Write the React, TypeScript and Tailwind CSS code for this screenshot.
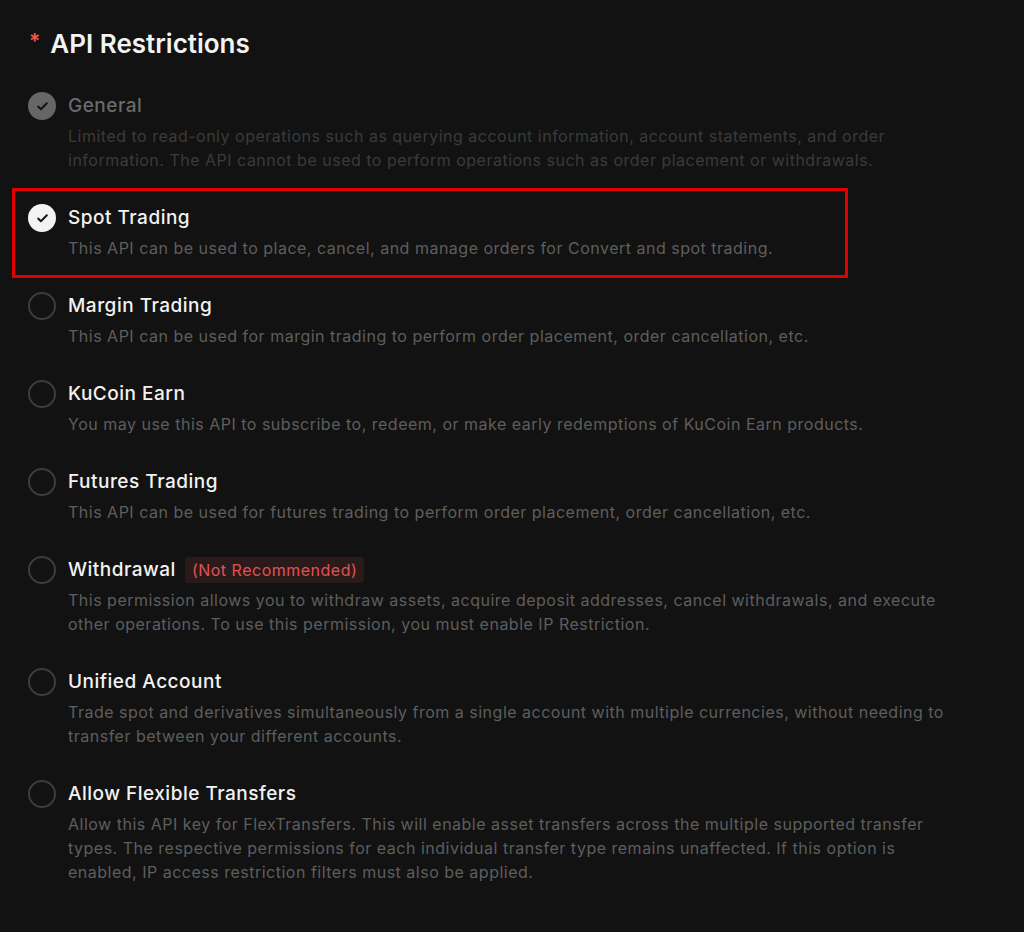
import { Check } from "lucide-react";

interface OptionProps {
  id: string;
  title: string;
  desc: string;
  state: "disabled" | "checked" | "off";
  badge?: string;
  highlight?: boolean;
}

const options: OptionProps[] = [
  {
    id: "general",
    title: "General",
    desc: "Limited to read-only operations such as querying account information, account statements, and order information. The API cannot be used to perform operations such as order placement or withdrawals.",
    state: "disabled",
  },
  {
    id: "spot",
    title: "Spot Trading",
    desc: "This API can be used to place, cancel, and manage orders for Convert and spot trading.",
    state: "checked",
    highlight: true,
  },
  {
    id: "margin",
    title: "Margin Trading",
    desc: "This API can be used for margin trading to perform order placement, order cancellation, etc.",
    state: "off",
  },
  {
    id: "earn",
    title: "KuCoin Earn",
    desc: "You may use this API to subscribe to, redeem, or make early redemptions of KuCoin Earn products.",
    state: "off",
  },
  {
    id: "futures",
    title: "Futures Trading",
    desc: "This API can be used for futures trading to perform order placement, order cancellation, etc.",
    state: "off",
  },
  {
    id: "withdrawal",
    title: "Withdrawal",
    desc: "This permission allows you to withdraw assets, acquire deposit addresses, cancel withdrawals, and execute other operations. To use this permission, you must enable IP Restriction.",
    state: "off",
    badge: "(Not Recommended)",
  },
  {
    id: "unified",
    title: "Unified Account",
    desc: "Trade spot and derivatives simultaneously from a single account with multiple currencies, without needing to transfer between your different accounts.",
    state: "off",
  },
  {
    id: "flex",
    title: "Allow Flexible Transfers",
    desc: "Allow this API key for FlexTransfers. This will enable asset transfers across the multiple supported transfer types. The respective permissions for each individual transfer type remains unaffected. If this option is enabled, IP access restriction filters must also be applied.",
    state: "off",
  },
];

function CheckCircle({ state }: { state: OptionProps["state"] }) {
  if (state === "off") {
    return (
      <div className="w-7 h-7 rounded-full border-2 border-[#3c3c3c] shrink-0" />
    );
  }
  return (
    <div
      className={
        state === "checked"
          ? "w-7 h-7 rounded-full bg-[#f3f3f3] flex items-center justify-center shrink-0"
          : "w-7 h-7 rounded-full bg-[#666666] flex items-center justify-center shrink-0"
      }
    >
      <Check size={13} strokeWidth={3.5} color="#121212" />
    </div>
  );
}

export default function App() {
  return (
    <div
      className="min-h-[932px] w-full bg-[#121212] pl-3 pt-[27px]"
      style={{ fontFamily: "Inter, 'Noto Sans', sans-serif" }}
    >
      <h2 className="pl-[17px] flex items-center gap-[10px] h-8 text-[26px] font-semibold text-[#f3f3f3]">
        <span className="text-[#f0584e] text-[21px] -mt-0.5">*</span>
        API Restrictions
      </h2>

      <div className="mt-[17px] flex flex-col">
        {options.map((opt) => (
          <div key={opt.id} className="relative flex gap-3 px-4 py-4">
            <CheckCircle state={opt.state} />
            <div className="flex flex-col gap-1 w-[892px]">
              <div className="flex items-center gap-[9px] h-7">
                <span
                  className={
                    opt.state === "disabled"
                      ? "text-[19px] font-medium tracking-[0.5px] text-[#6a6a6a]"
                      : "text-[19px] font-medium tracking-[0.5px] text-[#f2f2f2]"
                  }
                >
                  {opt.title}
                </span>
                {opt.badge && (
                  <span className="bg-[#2a1a1a] text-[#e05252] text-[16px] tracking-[0.5px] px-[7px] h-[26px] flex items-center rounded">
                    {opt.badge}
                  </span>
                )}
              </div>
              <p
                className={
                  opt.state === "disabled"
                    ? "text-[16px] leading-6 tracking-[0.5px] text-[#3b3b3b]"
                    : "text-[16px] leading-6 tracking-[0.5px] text-[#5e5e5e]"
                }
              >
                {opt.desc}
              </p>
            </div>
            {opt.highlight && (
              <div className="absolute left-0 top-0 w-[836px] h-[90px] border-[3px] border-[#e00000] pointer-events-none" />
            )}
          </div>
        ))}
      </div>
    </div>
  );
}
